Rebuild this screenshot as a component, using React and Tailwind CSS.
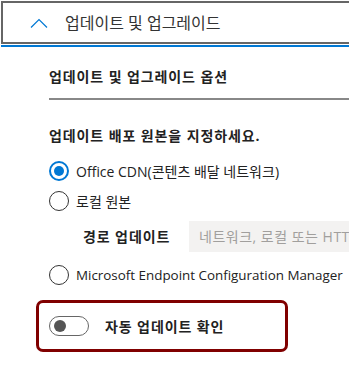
import React from 'react';

const font = { fontFamily: '"Segoe UI", "Open Sans", "Noto Sans CJK KR", sans-serif' };

function Radio({ checked, label, small }) {
  return (
    <div className="flex items-center gap-[7px] h-[20px]">
      {checked ? (
        <span className="shrink-0 w-[20px] h-[20px] rounded-full border-2 border-[#0078d4] flex items-center justify-center">
          <span className="w-[10px] h-[10px] rounded-full bg-[#0078d4]" />
        </span>
      ) : (
        <span className="shrink-0 w-[20px] h-[20px] rounded-full border border-[#333]" />
      )}
      <span className={`${small ? 'text-[13.4px]' : 'text-[14px]'} text-[#222] whitespace-nowrap`}>{label}</span>
    </div>
  );
}

export default function App() {
  return (
    <div className="w-[349px] h-[373px] overflow-hidden bg-white pt-[1px] pl-[1px]" style={font}>
      <div className="w-[400px] h-[43px] border-2 border-[#666] flex items-center">
        <svg width="18" height="10" viewBox="0 0 18 10" className="ml-[27px]">
          <path d="M1 9.5 L9 1.5 L17 9.5" fill="none" stroke="#0078d4" strokeWidth="1.2" />
        </svg>
        <span className="ml-[17px] text-[16px] text-[#333] whitespace-nowrap">업데이트 및 업그레이드</span>
      </div>
      <div className="h-[2px] w-[400px] bg-[#0078d4] mt-[1px]" />

      <div className="pl-[48px]">
        <div className="mt-[19px] text-[14px] font-bold tracking-[0.9px] text-[#222] whitespace-nowrap">업데이트 및 업그레이드 옵션</div>
        <div className="mt-[11px] h-[2px] bg-[#888]" />
        <div className="mt-[25px] text-[14px] font-bold tracking-[0.9px] text-[#222] whitespace-nowrap">업데이트 배포 원본을 지정하세요.</div>
        <div className="mt-[15px] flex flex-col gap-[10px]">
          <Radio checked label="Office CDN(콘텐츠 배달 네트워크)" />
          <Radio label="로컬 원본" />
        </div>
        <div className="mt-[10px] flex items-center">
          <span className="ml-[34px] w-[106px] text-[14px] font-bold tracking-[0.9px] text-[#222] whitespace-nowrap">경로 업데이트</span>
          <div className="h-[31px] flex-1 bg-[#f3f2f1] flex items-center pl-[10px] text-[14px] tracking-[0.5px] text-[#a19f9d] whitespace-nowrap overflow-hidden">
            네트워크, 로컬 또는 HTTP 경로
          </div>
        </div>
        <div className="mt-[13px]">
          <Radio small label="Microsoft Endpoint Configuration Manager" />
        </div>
      </div>

      <div className="ml-[35px] mt-[15px] w-[252px] h-[52px] border-[3px] border-[#800000] rounded-[7px] flex items-center">
        <span className="shrink-0 ml-[10px] w-[40px] h-[20px] rounded-full border border-[#666] flex items-center">
          <span className="ml-[4px] w-[12px] h-[12px] rounded-full bg-[#555]" />
        </span>
        <span className="ml-[16px] text-[14px] font-bold tracking-[0.9px] text-[#222] whitespace-nowrap">자동 업데이트 확인</span>
      </div>
    </div>
  );
}
